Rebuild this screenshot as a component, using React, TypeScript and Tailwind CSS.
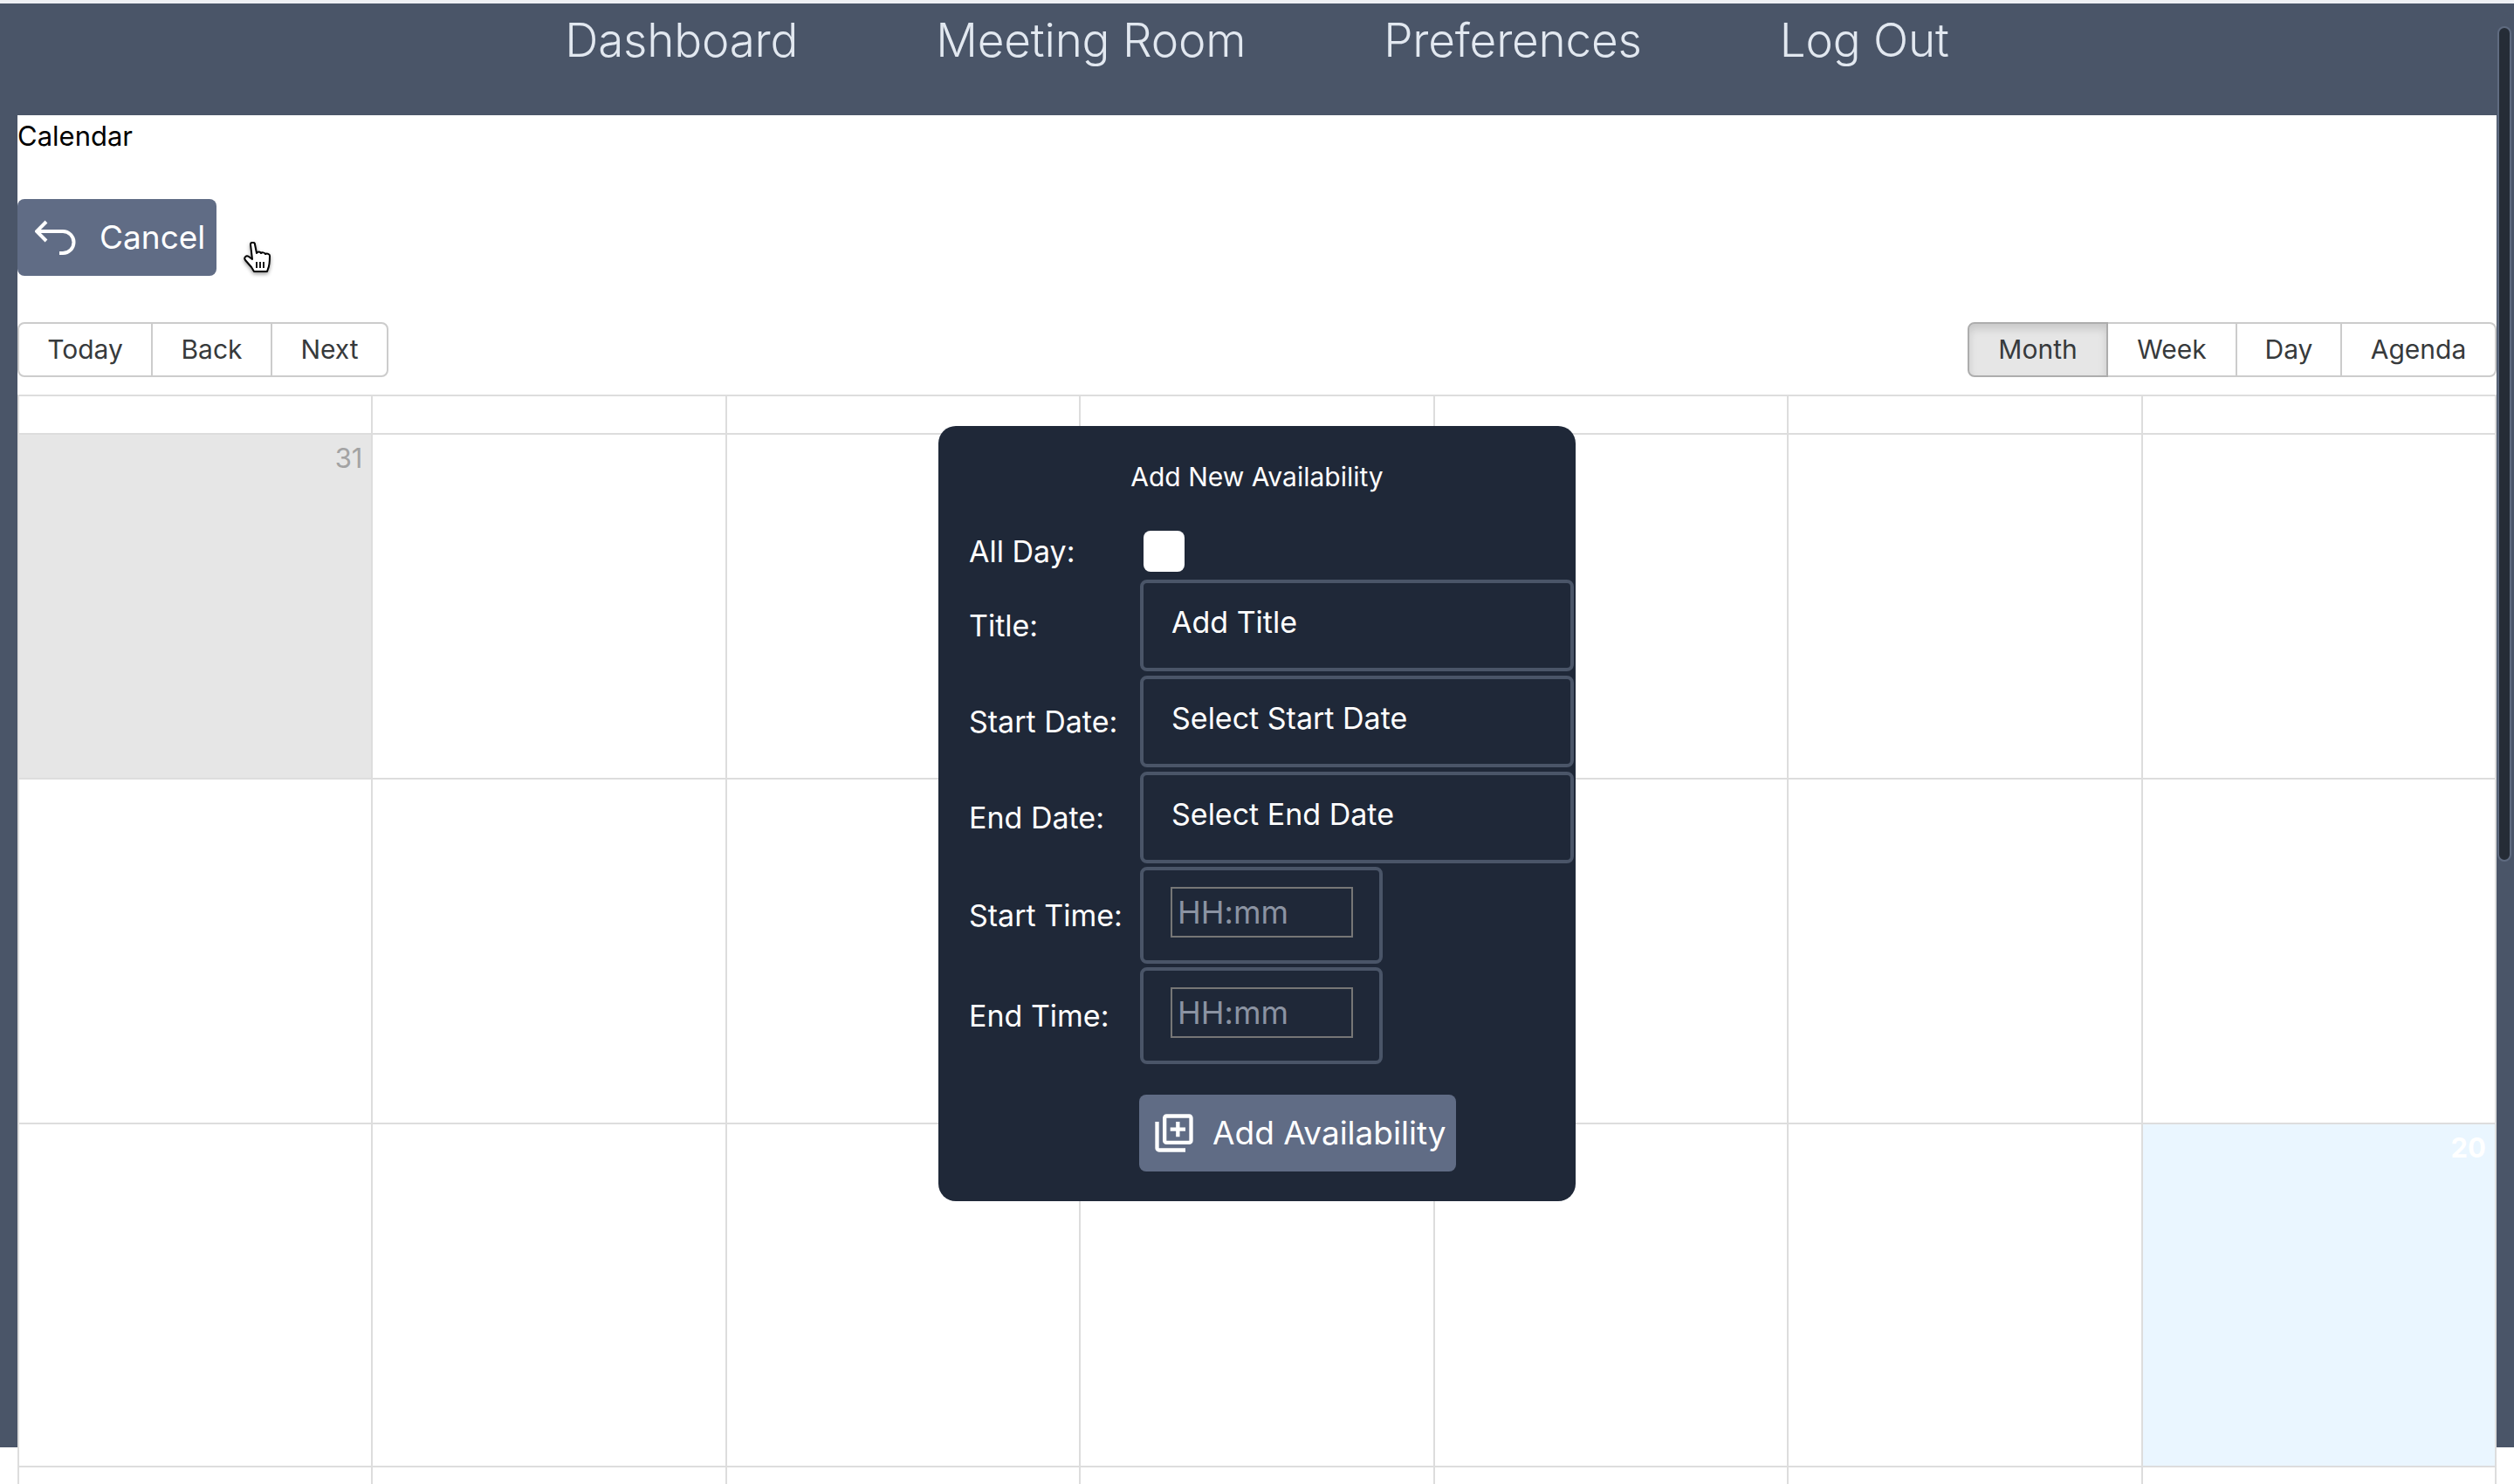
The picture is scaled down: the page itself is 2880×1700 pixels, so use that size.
import { MdOutlineLibraryAdd } from 'react-icons/md';

const NAV_ITEMS = ['Dashboard', 'Meeting Room', 'Preferences', 'Log Out'];
const LEFT_TOOLS = [
  { label: 'Today', width: 'w-[155px]' },
  { label: 'Back', width: 'w-[139px]' },
  { label: 'Next', width: 'w-[135px]' },
];
const RIGHT_TOOLS = [
  { label: 'Month', width: 'w-[161px]' },
  { label: 'Week', width: 'w-[150px]' },
  { label: 'Day', width: 'w-[122px]' },
  { label: 'Agenda', width: 'w-[179px]' },
];

function ToolGroup({ items, active }: { items: { label: string; width: string }[]; active?: string }) {
  return (
    <div className="flex">
      {items.map((item, i) => (
        <button
          key={item.label}
          className={`h-[63px] border-2 text-[30px] text-[#373a3c] ${item.width} ${i > 0 ? '-ml-[2px]' : ''} ${
            i === 0 ? 'rounded-l-lg' : ''
          } ${i === items.length - 1 ? 'rounded-r-lg' : ''} ${
            item.label === active
              ? 'z-10 border-[#adadad] bg-[#e6e6e6] shadow-[inset_0_6px_10px_rgba(0,0,0,0.125)]'
              : 'border-[#cccccc] bg-white'
          }`}
        >
          {item.label}
        </button>
      ))}
    </div>
  );
}

function CalendarRow({ height, first, last }: { height: string; first?: string; last?: string }) {
  return (
    <div className={`grid grid-cols-7 border-b-2 border-[#dddddd] ${height}`}>
      {Array.from({ length: 7 }).map((_, i) => (
        <div
          key={i}
          className={`border-r-2 border-[#dddddd] px-[10px] pt-[4px] text-right text-[31px] ${
            i === 0 && first ? 'bg-[#e6e6e6] text-[#a3a3a3]' : ''
          } ${i === 6 && last ? 'bg-[#eaf6ff] font-bold text-white' : ''}`}
        >
          {i === 0 ? first : i === 6 ? last : ''}
        </div>
      ))}
    </div>
  );
}

function FormRow({ label, children }: { label: string; children: React.ReactNode }) {
  return (
    <div className="flex items-center">
      <label className="w-[231px] shrink-0 whitespace-nowrap pl-[35px] pt-[4px] text-[34px] text-white">{label}</label>
      {children}
    </div>
  );
}

function TextBox({ text }: { text: string }) {
  return (
    <div className="mt-[5px] h-[105px] w-[497px] rounded-lg border-4 border-[#4a5568] pb-[8px] pl-[32px] pt-[20px] text-[34px] leading-[50px] text-white">
      {text}
    </div>
  );
}

function TimeBox() {
  return (
    <div className="mt-[4px] flex h-[111px] w-[278px] items-center rounded-lg border-4 border-[#4a5568] pb-[8px] pl-[31px]">
      <div className="flex h-[58px] w-[209px] items-center border-2 border-[#767676] pl-[6px] text-[36px] text-[#8b93a2]">
        HH:mm
      </div>
    </div>
  );
}

export default function App() {
  return (
    <div className="relative h-[1700px] w-[2880px] overflow-hidden bg-white font-['Inter',sans-serif]">
      <div className="h-[4px] bg-[#eef0f4]" />
      <div className="h-[1654px] bg-[#4a5568] px-[20px]">
        <nav className="flex h-[128px] justify-center gap-[158px] pt-[4px]">
          {NAV_ITEMS.map((item) => (
            <a key={item} className="text-[53px] font-light leading-[76px] tracking-[-0.2px] text-[#e2e8f0]">
              {item}
            </a>
          ))}
        </nav>

        <main className="h-[1700px] bg-white">
          <div className="text-[31px] leading-[48px] text-black">Calendar</div>

          <button className="mt-[48px] flex h-[88px] w-[228px] items-center rounded-lg bg-[#606c85] pl-[20px] text-[37px] text-white">
            <svg width="48" height="40" viewBox="0 0 48 40" fill="none" stroke="white" strokeWidth="4">
              <path d="M13 2 2 13l11 11" />
              <path d="M2 13h30a12.5 12.5 0 0 1 0 25h-4" />
            </svg>
            <span className="ml-[26px]">Cancel</span>
          </button>

          <div className="mt-[53px] flex justify-between">
            <ToolGroup items={LEFT_TOOLS} />
            <ToolGroup items={RIGHT_TOOLS} active="Month" />
          </div>

          <div className="mt-[20px] border-l-2 border-t-2 border-[#dddddd]">
            <CalendarRow height="h-[44px]" />
            <CalendarRow height="h-[395px]" first="31" />
            <CalendarRow height="h-[395px]" />
            <CalendarRow height="h-[393px]" last="20" />
            <CalendarRow height="h-[393px]" />
          </div>
        </main>
      </div>

      {/* modal */}
      <div className="absolute left-[1075px] top-[488px] h-[888px] w-[730px] rounded-[20px] bg-[#1f2838]">
        <h2 className="pt-[36px] text-center text-[30px] leading-[44px] text-white">Add New Availability</h2>
        <div className="mt-[36px] flex h-[55px] items-center">
          <label className="w-[235px] pl-[35px] text-[34px] text-white">All Day:</label>
          <span className="h-[47px] w-[47px] rounded-lg bg-white" />
        </div>
        <FormRow label="Title:">
          <TextBox text="Add Title" />
        </FormRow>
        <FormRow label="Start Date:">
          <TextBox text="Select Start Date" />
        </FormRow>
        <FormRow label="End Date:">
          <TextBox text="Select End Date" />
        </FormRow>
        <FormRow label="Start Time:">
          <TimeBox />
        </FormRow>
        <FormRow label="End Time:">
          <TimeBox />
        </FormRow>
        <button className="ml-[230px] mt-[35px] flex h-[88px] w-[363px] items-center rounded-lg bg-[#606c85] pl-[14px] text-[37px] text-white">
          <MdOutlineLibraryAdd className="h-[52px] w-[52px]" />
          <span className="ml-[18px] whitespace-nowrap">Add Availability</span>
        </button>
      </div>

      {/* scrollbar thumb */}
      <div className="absolute left-[2861px] top-[30px] h-[957px] w-[16px] rounded-full border-2 border-[#5f6b80] bg-[#252c36]" />

      {/* hand cursor */}
      <svg className="absolute left-[279px] top-[277px] drop-shadow-[0_2px_2px_rgba(0,0,0,0.4)]" width="34" height="36" viewBox="0 0 34 36">
        <path
          d="M8 3c0-3 5-3 5 0l2 10c1-2 4-2 5 0 1-1 4-1 5 1 2-1 5 0 5 2 0 6 0 11-2 15l-1 3H12l-3-5-7-8c-2-3 1-6 4-4l4 3L8 3z"
          fill="white"
          stroke="black"
          strokeWidth="2"
          strokeLinejoin="round"
        />
        <path d="M15 23v7M19 23v7M23 23v7" stroke="black" strokeWidth="1.8" />
      </svg>
    </div>
  );
}
